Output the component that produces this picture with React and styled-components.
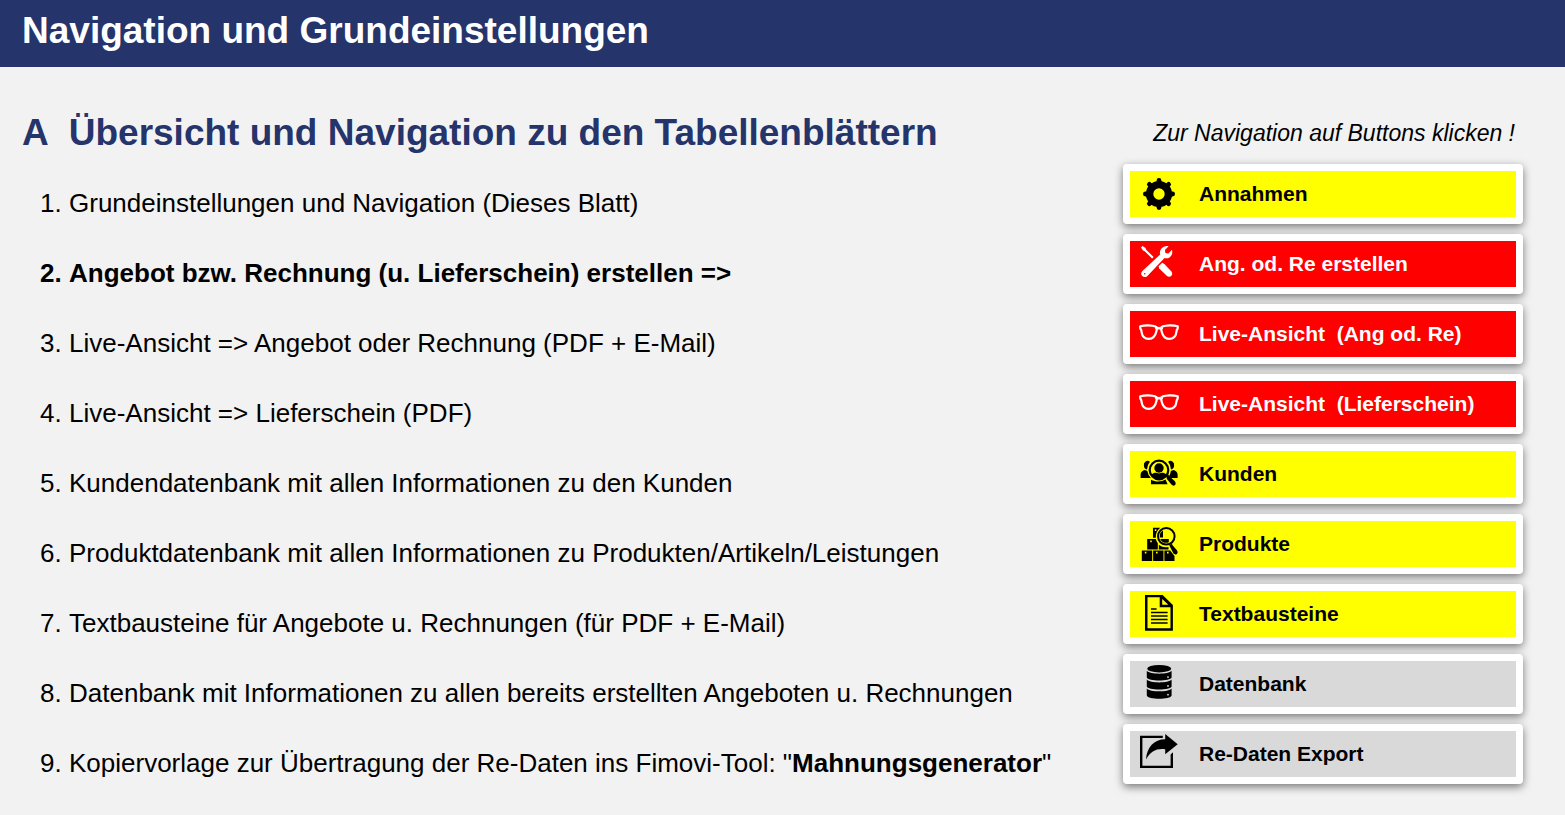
import React from 'react';
import styled, { createGlobalStyle } from 'styled-components';

const GlobalStyle = createGlobalStyle`
  * {
    box-sizing: border-box;
  }

  body {
    margin: 0;
    background: #f2f2f2;
    color: #000;
    font-family: 'Liberation Sans', Arial, sans-serif;
  }
`;

const Header = styled.header`
  padding: 9px 22px 14px;
  background: #25346a;

  h1 {
    margin: 0;
    color: #fff;
    font-size: 37px;
    line-height: 44px;
  }
`;

const Main = styled.main`
  display: grid;
  grid-template-columns: 1fr 400px;
  gap: 40px;
  padding: 44px 42px 30px 22px;
`;

const SectionTitle = styled.h2`
  display: flex;
  gap: 20px;
  margin: 0 0 33px;
  color: #25346a;
  font-size: 37px;
  line-height: 44px;
`;

const SheetList = styled.ol`
  display: grid;
  gap: 40px;
  margin: 0;
  padding: 0 0 0 47px;
  font-size: 26px;
  line-height: 30px;
`;

const SheetItem = styled.li`
  font-weight: ${({ $bold }) => ($bold ? 700 : 400)};
`;

const Hint = styled.p`
  margin: 0 8px 9px 0;
  font-size: 23px;
  font-style: italic;
  line-height: 44px;
  text-align: right;
  white-space: nowrap;
`;

const ButtonList = styled.nav`
  display: grid;
  gap: 10px;
`;

const variants = {
  yellow: { background: '#ffff00', color: '#000' },
  red: { background: '#ff0000', color: '#fff' },
  gray: { background: '#d9d9d9', color: '#000' },
};

const NavButton = styled.button`
  display: flex;
  align-items: center;
  gap: 20px;
  height: 60px;
  padding: 0 9px;
  border: 7px solid #fff;
  border-radius: 4px;
  background: ${({ $variant }) => variants[$variant].background};
  box-shadow: 0 3px 8px rgba(0, 0, 0, 0.5);
  color: ${({ $variant }) => variants[$variant].color};
  font-family: inherit;
  font-size: 21px;
  font-weight: 700;
  line-height: 24px;
  text-align: left;
  white-space: pre;
  cursor: pointer;
`;

const Icon = styled.svg.attrs({ viewBox: '0 0 40 40', 'aria-hidden': true })`
  flex: none;
  width: 40px;
  height: 40px;
  fill: currentColor;
`;

const GearIcon = () => (
  <Icon>
    <g fill="none" stroke="currentColor">
      <circle cx="20" cy="20" r="9.4" strokeWidth="7.4" />
      <path
        strokeWidth="4.8"
        strokeLinecap="round"
        d="M20 8v-1.6M20 32v1.600M8 20h-1.600M32 20h1.600M11.500 11.500l-1.100-1.100M28.500 11.500l1.100-1.100M11.500 28.500l-1.100 1.100M28.500 28.500l1.100 1.100"
      />
    </g>
  </Icon>
);

const ToolsIcon = () => (
  <Icon>
    <path d="M2 3.400 3.600 2 6.500 4l.7 1.700 7.400 7.300-1.500 1.500-7.400-7.300L4 6.600z" />
    <path d="m19.600 22.200 3.600-3.400 2.200 1.200 7 7.600c1.300 1.700.9 3.200 0 4.200-1.100 1.200-3 1.400-4.400.2l-7.800-7.400z" />
    <path
      fillRule="evenodd"
      d="M29.600 2.300 25.900 6l.5 3 2.900.5 3.700-3.700c.8 3.300-.2 5.800-2.200 7.400-1.600 1.200-3.600 1.400-5.300.9L8.400 31.900c-1.500 1.500-3.800 1.600-5.200.2-1.400-1.400-1.300-3.600.2-5.100L21.200 10.500c-.7-2-.2-4.200 1.300-5.900 1.800-2 4.400-3 7.100-2.300zM5.700 28.900a.8.800 0 1 0 0 1.600.8.800 0 0 0 0-1.600z"
    />
  </Icon>
);

const GlassesIcon = () => (
  <Icon>
    <g fill="none" stroke="currentColor" strokeLinejoin="round">
      <path
        strokeWidth="2.200"
        d="M1.200 12.300C6 10.900 13 11 16.600 12.600c1.300.7 1.400 2 .9 4.300-1.200 5.300-3.800 7.900-7.600 7.900-4.500 0-6.700-2.300-7.300-6.700-.2-1.500-.1-2.400-1.200-3.300zM38.800 12.300C34 10.900 27 11 23.400 12.600c-1.300.7-1.400 2-.9 4.300 1.200 5.300 3.800 7.900 7.600 7.900 4.500 0 6.700-2.300 7.300-6.700.2-1.500.1-2.400 1.200-3.300z"
      />
      <path strokeWidth="2.600" d="M16.500 13.300q3.500 2 7 0" />
    </g>
  </Icon>
);

const CustomersIcon = () => (
  <Icon>
    <path d="M4.900 11.400a3.700 3.700 0 0 1 6-3.600A12 12 0 0 0 8 15.500c-1.900-.3-3.100-2.100-3.100-4.100z" />
    <path d="M35.100 11.400a3.700 3.700 0 0 0-6-3.600 12 12 0 0 1 2.900 7.700c1.900-.3 3.100-2.100 3.100-4.100z" />
    <path d="M1.600 23.900v-3.700c0-2.300 2.200-3.700 4.200-4.300l2.500 1.100a12 12 0 0 0 3.600 6.900z" />
    <path d="M38.600 23.900v-3.700c0-2.300-2.200-3.700-4.200-4.300l-2.500 1.100a12 12 0 0 1-1.900 5.200l1.800 1.700z" />
    <circle cx="20" cy="16" r="9.300" fill="none" stroke="currentColor" strokeWidth="2.200" />
    <circle cx="20" cy="14" r="4.700" />
    <path d="M12.200 20.600c1.900-1.700 3.700-1.900 5.200-1.900l2.600.8 2.600-.8c1.500 0 3.300.2 5.200 1.900-1.500 2.800-4.500 4.300-7.800 4.300s-6.300-1.500-7.800-4.300z" />
    <path d="M12 30.200v-4.500c4.400 2.400 10.600 2.400 14.500-.2l2.100 4.700z" />
    <path d="m27.200 22.100 2-1.700 1.400 2 5 4.700c1.500 1.600 1.300 3.200.5 4-.9.900-2.600.8-3.900-.8l-4.300-5.300z" />
  </Icon>
);

const ProductsIcon = () => (
  <Icon>
    <path
      fillRule="evenodd"
      d="M2.800 26.400h10.400V37H2.800zM5.800 27.800v1.800h1.600v-1.800zM14.100 26.400h10.400V37H14.100zM17 27.800v1.800h1.600v-1.800zM25.400 26.400h5.800l4.300 5.600v5H25.400zM28 27.800v1.800h1.600v-1.800z"
    />
    <path
      fillRule="evenodd"
      d="M8.200 15h8.600a11.500 11.500 0 0 0 2 4.200v6.200H8.200zM11.200 16.500v1.800h1.600v-1.800z"
    />
    <path d="M19.800 20.800c3 2.400 6.500 3 9.700 2.100v2.500h-9.700z" />
    <path
      fillRule="evenodd"
      d="M14 3.700h7.300c-3.200 2.300-4.700 5.900-4.500 10H14zM15.800 5.200V7h1.600V5.200z"
    />
    <circle cx="27.300" cy="12.300" r="8.300" fill="none" stroke="currentColor" strokeWidth="2" />
    <path d="M20.800 10.500c.6-1.900 1.600-3 3.200-4v7h-3.200zM21.200 14.900h8.600v3.400c-3.500 1.400-6.800.2-8.600-3.400z" />
    <path d="m30.300 21.200 2.400-1.400 1.300 2 3.900 4.400c1.200 2 .8 3.300-.3 4-1.100.7-2.400.4-3.400-1.100l-2.700-5.400z" />
  </Icon>
);

const DocumentIcon = () => (
  <Icon>
    <path
      fillRule="evenodd"
      d="M6 1h17.600L33.900 11v25.700H6zM8.500 3.300v31h23V13.200H20.700V3.300zm14.700 1.600v5.900h6.100z"
    />
    <path
      fill="none"
      stroke="currentColor"
      strokeWidth="1.500"
      d="M12 14.900h5.600M12 18.400h16.600M12 21.900h16.600M12 25.400h16.600M12 29h16.600"
    />
  </Icon>
);

const DatabaseIcon = () => (
  <Icon>
    <ellipse cx="20.200" cy="4.700" rx="12" ry="3.700" />
    <path
      fillRule="evenodd"
      d="M7.800 6.800c3 3.800 21.800 3.800 24.800 0v6.800c-1 4-23.800 4-24.800 0zM29 12.200a.9.900 0 1 0 0 1.800.9.900 0 0 0 0-1.800z"
    />
    <path
      fillRule="evenodd"
      d="M7.800 15.600c3 3.800 21.800 3.800 24.800 0v6.800c-1 4-23.800 4-24.800 0zM29 21a.9.900 0 1 0 0 1.800.9.900 0 0 0 0-1.800z"
    />
    <path
      fillRule="evenodd"
      d="M7.800 24.400c3 3.800 21.800 3.800 24.800 0v7c-1 4.300-23.800 4.300-24.800 0zM29 29.800a.9.900 0 1 0 0 1.800.9.900 0 0 0 0-1.800z"
    />
  </Icon>
);

const ExportIcon = () => (
  <Icon>
    <path d="M1 1.800h22.800V4.100H3.400v27.700h28.200V20.600l2.400-2.400V34.100H1z" />
    <path d="M26.200 0 38.700 10.200 26.200 20.300v-5.100C17.600 14.100 11.600 17 7 25.400 7.800 13.200 15 5.200 26.200 5.200z" />
  </Icon>
);

const sheets = [
  { text: 'Grundeinstellungen und Navigation (Dieses Blatt)' },
  { text: 'Angebot bzw. Rechnung (u. Lieferschein) erstellen =>', bold: true },
  { text: 'Live-Ansicht => Angebot oder Rechnung (PDF + E-Mail)' },
  { text: 'Live-Ansicht => Lieferschein (PDF)' },
  { text: 'Kundendatenbank mit allen Informationen zu den Kunden' },
  { text: 'Produktdatenbank mit allen Informationen zu Produkten/Artikeln/Leistungen' },
  { text: 'Textbausteine für Angebote u. Rechnungen (für PDF + E-Mail)' },
  { text: 'Datenbank mit Informationen zu allen bereits erstellten Angeboten u. Rechnungen' },
  {
    text: (
      <>
        Kopiervorlage zur Übertragung der Re-Daten ins Fimovi-Tool: "<b>Mahnungsgenerator</b>"
      </>
    ),
  },
];

const buttons = [
  { label: 'Annahmen', variant: 'yellow', icon: GearIcon },
  { label: 'Ang. od. Re erstellen', variant: 'red', icon: ToolsIcon },
  { label: 'Live-Ansicht  (Ang od. Re)', variant: 'red', icon: GlassesIcon },
  { label: 'Live-Ansicht  (Lieferschein)', variant: 'red', icon: GlassesIcon },
  { label: 'Kunden', variant: 'yellow', icon: CustomersIcon },
  { label: 'Produkte', variant: 'yellow', icon: ProductsIcon },
  { label: 'Textbausteine', variant: 'yellow', icon: DocumentIcon },
  { label: 'Datenbank', variant: 'gray', icon: DatabaseIcon },
  { label: 'Re-Daten Export', variant: 'gray', icon: ExportIcon },
];

const App = () => {
  return (
    <>
      <GlobalStyle />
      <Header>
        <h1>Navigation und Grundeinstellungen</h1>
      </Header>
      <Main>
        <section>
          <SectionTitle>
            <span>A</span>
            <span>Übersicht und Navigation zu den Tabellenblättern</span>
          </SectionTitle>
          <SheetList>
            {sheets.map((sheet, index) => (
              <SheetItem key={index} $bold={sheet.bold}>
                {sheet.text}
              </SheetItem>
            ))}
          </SheetList>
        </section>
        <aside>
          <Hint>Zur Navigation auf Buttons klicken !</Hint>
          <ButtonList>
            {buttons.map(({ label, variant, icon: ButtonIcon }) => (
              <NavButton key={label} type="button" $variant={variant}>
                <ButtonIcon />
                {label}
              </NavButton>
            ))}
          </ButtonList>
        </aside>
      </Main>
    </>
  );
};

export default App;
